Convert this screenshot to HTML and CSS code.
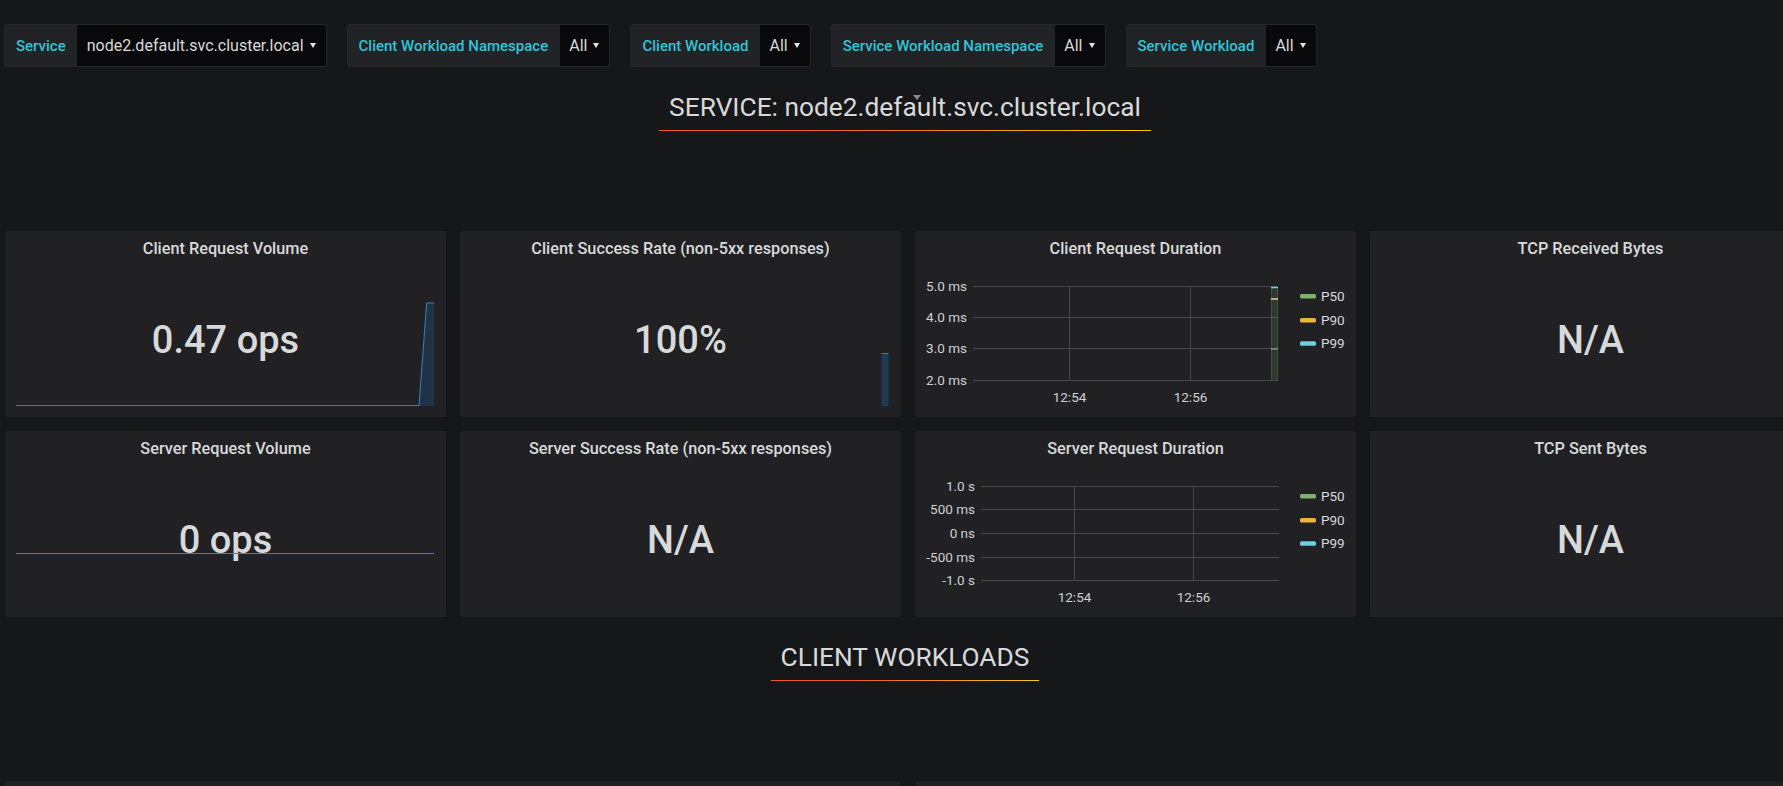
FILE: index.html
```html
<!DOCTYPE html>
<html>
<head>
<meta charset="utf-8">
<title>Istio Service Dashboard</title>
<link rel="stylesheet" href="styles.css">
</head>
<body>
<div class="dashboard">
  <div class="vars">
    <div class="var"><span class="var-label">Service</span><span class="var-value">node2.default.svc.cluster.local<i class="caret"></i></span></div>
    <div class="var"><span class="var-label">Client Workload Namespace</span><span class="var-value">All<i class="caret"></i></span></div>
    <div class="var"><span class="var-label">Client Workload</span><span class="var-value">All<i class="caret"></i></span></div>
    <div class="var"><span class="var-label">Service Workload Namespace</span><span class="var-value">All<i class="caret"></i></span></div>
    <div class="var"><span class="var-label">Service Workload</span><span class="var-value">All<i class="caret"></i></span></div>
  </div>

  <div class="text-panel">
    <i class="hover-caret"></i>
    <span class="dash-header">SERVICE: node2.default.svc.cluster.local</span>
  </div>

  <div class="grid">
    <div class="panel">
      <div class="panel-title">Client Request Volume</div>
      <div class="stat">0.47 ops</div>
      <svg class="spark" viewBox="0 0 418 104" preserveAspectRatio="none">
        <polygon points="403,104 410.7,1 418,1 418,104" fill="rgba(31,120,193,0.22)"/>
        <polyline points="0,103.5 403,103.5 410.7,1 418,1" fill="none" stroke="#3a7fc6" stroke-width="1"/>
      </svg>
    </div>
    <div class="panel">
      <div class="panel-title">Client Success Rate (non-5xx responses)</div>
      <div class="stat">100%</div>
      <svg class="spark" viewBox="0 0 418 104" preserveAspectRatio="none">
        <rect x="410.5" y="51" width="7" height="53" fill="rgba(31,120,193,0.28)"/>
        <line x1="410.5" y1="51.5" x2="417.5" y2="51.5" stroke="#3a7fc6" stroke-width="1"/>
      </svg>
    </div>
    <div class="panel">
      <div class="panel-title">Client Request Duration</div>
      <svg class="graph" width="440" height="158" viewBox="0 0 440 158">
        <g stroke="#47484b" stroke-width="1">
          <line x1="58" y1="27.5" x2="363" y2="27.5"/>
          <line x1="58" y1="58.5" x2="363" y2="58.5"/>
          <line x1="58" y1="89.5" x2="363" y2="89.5"/>
          <line x1="58" y1="121.5" x2="363" y2="121.5"/>
          <line x1="154.5" y1="27.5" x2="154.5" y2="121.5"/>
          <line x1="275.5" y1="27.5" x2="275.5" y2="121.5"/>
        </g>
        <rect x="356" y="28" width="7" height="93.5" fill="rgba(126,178,109,0.16)"/>
        <line x1="356.5" y1="28" x2="356.5" y2="121.5" stroke="rgba(126,178,109,0.22)"/>
        <line x1="362.5" y1="28" x2="362.5" y2="121.5" stroke="rgba(126,178,109,0.22)"/>
        <line x1="356" y1="28.5" x2="363" y2="28.5" stroke="#6ed0e0" stroke-width="1.5"/>
        <line x1="356" y1="40" x2="363" y2="40" stroke="#e9d27a" stroke-width="1.5"/>
        <line x1="356" y1="90" x2="363" y2="90" stroke="#a9b898" stroke-width="1.2"/>
        <g class="axis" text-anchor="end">
          <text x="52" y="32">5.0 ms</text>
          <text x="52" y="63.3">4.0 ms</text>
          <text x="52" y="94.3">3.0 ms</text>
          <text x="52" y="125.6">2.0 ms</text>
        </g>
        <g class="axis" text-anchor="middle">
          <text x="154.5" y="142.7">12:54</text>
          <text x="275.5" y="142.7">12:56</text>
        </g>
        <g class="legend">
          <rect x="385" y="35" width="16" height="4.5" rx="1.5" fill="#7eb26d"/>
          <text x="406" y="41.7">P50</text>
          <rect x="385" y="59" width="16" height="4.5" rx="1.5" fill="#eab839"/>
          <text x="406" y="65.7">P90</text>
          <rect x="385" y="82.3" width="16" height="4.5" rx="1.5" fill="#6ed0e0"/>
          <text x="406" y="89">P99</text>
        </g>
      </svg>
    </div>
    <div class="panel">
      <div class="panel-title">TCP Received Bytes</div>
      <div class="stat">N/A</div>
    </div>

    <div class="panel">
      <div class="panel-title">Server Request Volume</div>
      <div class="stat">0 ops</div>
      <svg class="spark" viewBox="0 0 418 104" preserveAspectRatio="none">
        <line x1="0" y1="51.5" x2="418" y2="51.5" stroke="#3a7fc6" stroke-width="1"/>
      </svg>
    </div>
    <div class="panel">
      <div class="panel-title">Server Success Rate (non-5xx responses)</div>
      <div class="stat">N/A</div>
    </div>
    <div class="panel">
      <div class="panel-title">Server Request Duration</div>
      <svg class="graph" width="440" height="158" viewBox="0 0 440 158">
        <g stroke="#47484b" stroke-width="1">
          <line x1="66" y1="27.5" x2="364" y2="27.5"/>
          <line x1="66" y1="50.5" x2="364" y2="50.5"/>
          <line x1="66" y1="74.5" x2="364" y2="74.5"/>
          <line x1="66" y1="98.5" x2="364" y2="98.5"/>
          <line x1="66" y1="121.5" x2="364" y2="121.5"/>
          <line x1="159.5" y1="27.5" x2="159.5" y2="121.5"/>
          <line x1="278.5" y1="27.5" x2="278.5" y2="121.5"/>
        </g>
        <g class="axis" text-anchor="end">
          <text x="60" y="32">1.0 s</text>
          <text x="60" y="55">500 ms</text>
          <text x="60" y="79">0 ns</text>
          <text x="60" y="103">-500 ms</text>
          <text x="60" y="126">-1.0 s</text>
        </g>
        <g class="axis" text-anchor="middle">
          <text x="159.5" y="142.7">12:54</text>
          <text x="278.5" y="142.7">12:56</text>
        </g>
        <g class="legend">
          <rect x="385" y="35" width="16" height="4.5" rx="1.5" fill="#7eb26d"/>
          <text x="406" y="41.7">P50</text>
          <rect x="385" y="59" width="16" height="4.5" rx="1.5" fill="#eab839"/>
          <text x="406" y="65.7">P90</text>
          <rect x="385" y="82.3" width="16" height="4.5" rx="1.5" fill="#6ed0e0"/>
          <text x="406" y="89">P99</text>
        </g>
      </svg>
    </div>
    <div class="panel">
      <div class="panel-title">TCP Sent Bytes</div>
      <div class="stat">N/A</div>
    </div>
  </div>

  <div class="text-panel">
    <span class="dash-header">CLIENT WORKLOADS</span>
  </div>

  <div class="grid">
    <div class="panel wide"></div>
    <div class="panel wide"></div>
  </div>
</div>
</body>
</html>
```
FILE: styles.css
```css
* { box-sizing: border-box; }

html, body {
  margin: 0;
  padding: 0;
  overflow: hidden;
  background: #161719;
}

body {
  font-family: Roboto, "Noto Sans", "Liberation Sans", sans-serif;
  color: #d8d9da;
}

.dashboard {
  width: 1811px;
}

/* template variables bar */
.vars {
  display: flex;
  gap: 20px;
  height: 67px;
  padding: 24px 0 0 4px;
  align-items: flex-start;
}

.var {
  display: flex;
  height: 43px;
}

.var-label {
  display: flex;
  align-items: center;
  padding: 0 11.5px 0 11px;
  background: #212327;
  border: 1px solid #262628;
  border-right: 0;
  border-radius: 3px 0 0 3px;
  color: #32c3d4;
  font-size: 15px;
  font-weight: 500;
  white-space: nowrap;
}

.var-value {
  display: flex;
  align-items: center;
  gap: 6px;
  padding: 0 10px 0 9.5px;
  background: #09090b;
  border: 1px solid #262628;
  border-left: 0;
  border-radius: 0 3px 3px 0;
  color: #d8d9da;
  font-size: 16px;
  white-space: nowrap;
}

.caret {
  display: block;
  width: 0;
  height: 0;
  border-left: 3.5px solid transparent;
  border-right: 3.5px solid transparent;
  border-top: 5.5px solid #e4e5e6;
}

/* text (row header) panels */
.text-panel {
  position: relative;
  width: 1800px;
  margin-left: 5px;
  height: 164px;
  padding-top: 16px;
  text-align: center;
}

.dash-header {
  display: inline-block;
  font-size: 26.3px;
  line-height: 31px;
  font-weight: 400;
  color: #d8d9da;
  padding: 9px 10px 7px;
  border-style: solid;
  border-width: 0 0 1px 0;
  border-image: linear-gradient(to right, #f05a28 30%, #fbca0a 99%) 1;
}

.hover-caret {
  position: absolute;
  top: 28px;
  left: calc(50% + 8px);
  width: 0;
  height: 0;
  border-left: 4.5px solid transparent;
  border-right: 4.5px solid transparent;
  border-top: 5px solid #8a8b8d;
}

/* panels grid */
.grid {
  display: grid;
  grid-template-columns: repeat(4, 1fr);
  gap: 14px;
  width: 1806px;
  margin-left: 5px;
}

.panel {
  position: relative;
  height: 186px;
  display: flex;
  flex-direction: column;
  background: #212124;
  border-radius: 3px;
  overflow: hidden;
}

.panel.wide {
  grid-column: span 2;
}

.panel-title {
  height: 28px;
  padding-top: 8px;
  line-height: 20px;
  font-size: 16.3px;
  font-weight: 500;
  text-align: center;
  color: #d8d9da;
  white-space: nowrap;
}

.stat {
  flex: 1;
  display: flex;
  align-items: center;
  justify-content: center;
  padding-top: 4px;
  font-size: 38px;
  font-weight: 500;
  line-height: 1;
  color: #d8d9da;
}

.spark {
  position: absolute;
  left: 11px;
  right: 12px;
  bottom: 11px;
  width: 418px;
  height: 104px;
}

.graph {
  display: block;
}

.axis text {
  font-family: Roboto, "Noto Sans", sans-serif;
  font-size: 13.5px;
  fill: #cfd0d1;
}

.legend text {
  font-family: Roboto, "Noto Sans", sans-serif;
  font-size: 13.5px;
  fill: #d8d9da;
}
```
